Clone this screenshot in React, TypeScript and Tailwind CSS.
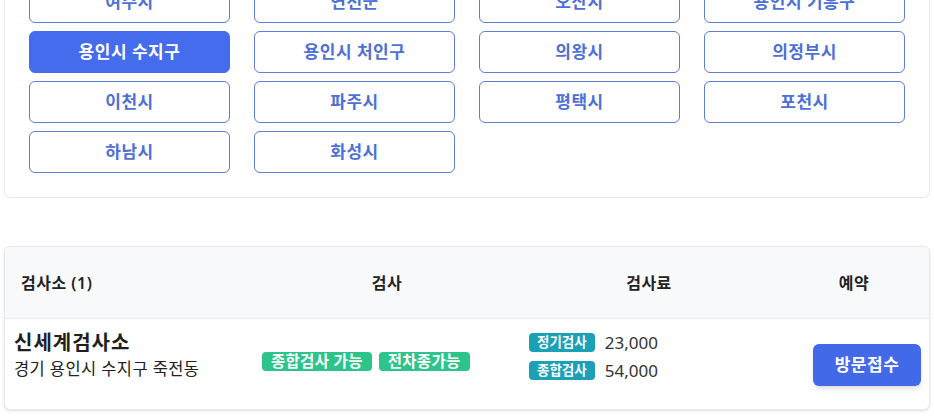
import React from "react";

const regions = [
  "여주시", "연천군", "오산시", "용인시 기흥구",
  "용인시 수지구", "용인시 처인구", "의왕시", "의정부시",
  "이천시", "파주시", "평택시", "포천시",
  "하남시", "화성시",
];

export default function App() {
  return (
    <div className="w-[934px] h-[418px] overflow-hidden bg-white px-[4px] font-['Noto_Sans','Noto_Sans_CJK_KR',sans-serif]">
      <div className="mt-[-44px] rounded-md border border-[#e6e8ec] bg-white p-6">
        <div className="grid grid-cols-4 gap-x-6 gap-y-2">
          {regions.map((r) => {
            const sel = r === "용인시 수지구";
            return (
              <button
                key={r}
                className={
                  sel
                    ? "h-[42px] rounded-md border border-[#456cec] bg-[#456cec] text-[17px] font-semibold tracking-[0.5px] text-white"
                    : "h-[42px] rounded-md border border-[#5d7dd8] bg-white text-[17px] font-semibold tracking-[0.5px] text-[#4d70d6]"
                }
              >
                {r}
              </button>
            );
          })}
        </div>
      </div>

      <div className="mt-12 overflow-hidden rounded-md border border-[#e6e8ec] bg-white shadow-sm">
        <div className="grid h-[72px] grid-cols-[253px_258px_266px_147px] items-center border-b border-[#e6e8ec] bg-[#f8f9fb] text-[16px] font-semibold text-[#222]">
          <div className="pl-4 tracking-[0.5px]">검사소 (1)</div>
          <div className="text-center tracking-[0.5px]">검사</div>
          <div className="text-center tracking-[0.5px]">검사료</div>
          <div className="pr-[3px] text-center tracking-[0.5px]">예약</div>
        </div>
        <div className="grid h-[90px] grid-cols-[253px_258px_266px_147px] items-center">
          <div className="pb-[18px] pl-[9px]">
            <div className="text-[20px] font-bold leading-[27px] tracking-[1px] text-[#1f1f1f]">신세계검사소</div>
            <div className="text-[16.5px] leading-[26px] tracking-[0.4px] text-[#222]">경기 용인시 수지구 죽전동</div>
          </div>
          <div className="flex gap-[7px] pb-[5px] pl-[4px]">
            <span className="inline-flex h-[19px] items-center rounded-[4px] bg-[#2cc48a] px-[9px] text-[15.5px] font-semibold tracking-[0.3px] text-white">종합검사 가능</span>
            <span className="inline-flex h-[19px] items-center rounded-[4px] bg-[#2cc48a] px-[9px] text-[15.5px] font-semibold tracking-[0.3px] text-white">전차종가능</span>
          </div>
          <div className="flex flex-col gap-[9px] pb-[16px] pl-[13px]">
            <div className="flex h-[19px] items-center gap-[10px]">
              <span className="inline-flex h-[19px] items-center rounded-[4px] bg-[#1ba0b6] px-[8px] text-[13.5px] font-bold text-white">정기검사</span>
              <span className="text-[17px] leading-[19px] text-[#333]">23,000</span>
            </div>
            <div className="flex h-[19px] items-center gap-[10px]">
              <span className="inline-flex h-[19px] items-center rounded-[4px] bg-[#1ba0b6] px-[8px] text-[13.5px] font-bold text-white">종합검사</span>
              <span className="text-[17px] leading-[19px] text-[#333]">54,000</span>
            </div>
          </div>
          <div className="flex justify-end pr-[8px] pt-[2px]">
            <button className="h-[42px] w-[108px] rounded-md bg-[#4169e8] text-[17px] font-semibold tracking-[0.5px] text-white shadow-md">방문접수</button>
          </div>
        </div>
      </div>
    </div>
  );
}
